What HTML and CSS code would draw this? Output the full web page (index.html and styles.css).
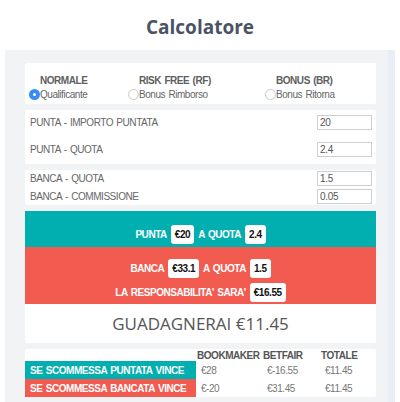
FILE: index.html
```html
<!DOCTYPE html>
<html lang="it">
<head>
    <meta charset="UTF-8">
    <meta name="viewport" content="width=device-width, initial-scale=1.0">
    <title>Calcolatore</title>
    <link rel="stylesheet" href="styles.css">
</head>
<body>
    <h2 class="title">Calcolatore</h2>

    <div class="frame">
        <div class="panel">
            <div class="card modes">
                <label class="mode mode-normal">
                    <span class="mode-title">NORMALE</span>
                    <span class="mode-option"><span class="radio checked"></span>Qualificante</span>
                </label>
                <label class="mode mode-rf">
                    <span class="mode-title">RISK FREE (RF)</span>
                    <span class="mode-option"><span class="radio"></span>Bonus Rimborso</span>
                </label>
                <label class="mode mode-br">
                    <span class="mode-title">BONUS (BR)</span>
                    <span class="mode-option"><span class="radio"></span>Bonus Ritorna</span>
                </label>
            </div>

            <div class="card fields fields-punta">
                <div class="field">
                    <span>PUNTA - IMPORTO PUNTATA</span>
                    <input type="text" value="20">
                </div>
                <div class="field">
                    <span>PUNTA - QUOTA</span>
                    <input type="text" value="2.4">
                </div>
            </div>

            <div class="card fields fields-banca">
                <div class="field">
                    <span>BANCA - QUOTA</span>
                    <input type="text" value="1.5">
                </div>
                <div class="field">
                    <span>BANCA - COMMISSIONE</span>
                    <input type="text" value="0.05">
                </div>
            </div>

            <div class="summary">
                <div class="summary-punta">
                    <p>PUNTA <span class="badge">€20</span> A QUOTA <span class="badge">2.4</span></p>
                </div>
                <div class="summary-banca">
                    <p>BANCA <span class="badge">€33.1</span> A QUOTA <span class="badge">1.5</span></p>
                    <p>LA RESPONSABILITA' SARA' <span class="badge">€16.55</span></p>
                </div>
            </div>

            <div class="card result">GUADAGNERAI €11.45</div>

            <div class="card outcome">
                <table>
                    <colgroup>
                        <col class="col-label">
                        <col class="col-bookmaker">
                        <col class="col-betfair">
                        <col>
                    </colgroup>
                    <tr>
                        <th></th>
                        <th>BOOKMAKER</th>
                        <th>BETFAIR</th>
                        <th>TOTALE</th>
                    </tr>
                    <tr>
                        <td class="win-punta">SE SCOMMESSA PUNTATA VINCE</td>
                        <td>€28</td>
                        <td>€-16.55</td>
                        <td>€11.45</td>
                    </tr>
                    <tr>
                        <td class="win-banca">SE SCOMMESSA BANCATA VINCE</td>
                        <td>€-20</td>
                        <td>€31.45</td>
                        <td>€11.45</td>
                    </tr>
                </table>
            </div>
        </div>
        <div class="gutter"></div>
    </div>
</body>
</html>
```

FILE: styles.css
```css
body {
    margin: 0;
    background-color: #fff;
    font-family: 'Liberation Sans', Arial, sans-serif;
    letter-spacing: -0.45px;
    word-spacing: 1px;
    color: #666;
}

.title {
    margin: 0;
    padding-top: 14px;
    height: 50px;
    box-sizing: border-box;
    text-align: center;
    font-family: 'Open Sans', sans-serif;
    font-size: 19px;
    font-weight: 700;
    letter-spacing: normal;
    word-spacing: normal;
    color: #4a5366;
}

.frame {
    display: flex;
    margin-left: 5px;
    width: 390px;
    height: 352px;
}

.panel {
    flex: 1;
    background-color: #f2f3f4;
    padding: 13px 12px 0 20px;
}

.gutter {
    width: 7px;
    background-color: #e9edf5;
}

.card {
    background-color: #fff;
    border-radius: 2px;
    margin-bottom: 6px;
}

/* modalita' */
.modes {
    display: grid;
    grid-template-columns: 99px 137px 1fr;
    height: 41px;
    box-sizing: border-box;
    padding: 12px 0 0 4px;
}

.mode {
    display: flex;
    flex-direction: column;
    font-size: 10px;
    cursor: pointer;
}

.mode-title {
    font-weight: 700;
    color: #5e5e5e;
    padding-left: 11px;
    line-height: 11px;
}

.mode-option {
    display: flex;
    align-items: center;
    margin-top: 3px;
    line-height: 11px;
    color: #666;
}

.radio {
    width: 11px;
    height: 11px;
    box-sizing: border-box;
    border-radius: 50%;
    border: 1px solid #c8c8c8;
    background-color: #fff;
}

.radio.checked {
    border: 4px solid #3a8cf5;
}

/* campi */
.fields {
    display: flex;
    flex-direction: column;
    padding: 5px 4px 7px 5px;
}

.field {
    display: flex;
    justify-content: space-between;
    align-items: center;
    font-size: 10px;
    color: #666;
}

.fields-punta {
    gap: 12px;
}

.fields-banca {
    gap: 3px;
    padding-top: 1px;
    padding-bottom: 1px;
}

.field input {
    width: 55px;
    height: 15px;
    box-sizing: border-box;
    border: 1px solid #cfcfcf;
    padding: 0 2px;
    font-family: 'Liberation Sans', Arial, sans-serif;
    font-size: 10px;
    letter-spacing: -0.3px;
    color: #555;
}

/* riepilogo */
.summary p {
    margin: 0;
    height: 24px;
    display: flex;
    align-items: center;
    justify-content: center;
    gap: 4px;
    color: #fff;
    font-size: 10px;
    font-weight: 700;
}

.summary-punta {
    background-color: #02afb0;
    padding-top: 11px;
    height: 36px;
    box-sizing: border-box;
}

.summary-banca {
    background-color: #f25b50;
    padding-top: 9px;
    height: 57px;
    box-sizing: border-box;
}

.badge {
    background-color: #fff;
    color: #111;
    border-radius: 3px;
    padding: 0 4px;
    height: 19px;
    line-height: 19px;
}

.result {
    height: 39px;
    display: flex;
    align-items: center;
    justify-content: center;
    font-family: 'Open Sans', sans-serif;
    font-size: 17px;
    letter-spacing: normal;
    word-spacing: normal;
    color: #555;
    border-radius: 0 0 2px 2px;
}

/* esiti */
.outcome table {
    width: 100%;
    table-layout: fixed;
    border-collapse: collapse;
    font-size: 10px;
}

.col-label {
    width: 171px;
}

.col-bookmaker {
    width: 66px;
}

.col-betfair {
    width: 58px;
}

.outcome th {
    height: 12px;
    padding: 0 0 0 1px;
    text-align: left;
    font-weight: 700;
    color: #555;
    white-space: nowrap;
}

.outcome td {
    height: 18px;
    padding: 0 0 0 5px;
    color: #777;
    white-space: nowrap;
}

.outcome td.win-punta,
.outcome td.win-banca {
    color: #fff;
    font-weight: 700;
}

.win-punta {
    background-color: #02afb0;
}

.win-banca {
    background-color: #f25b50;
}
```
